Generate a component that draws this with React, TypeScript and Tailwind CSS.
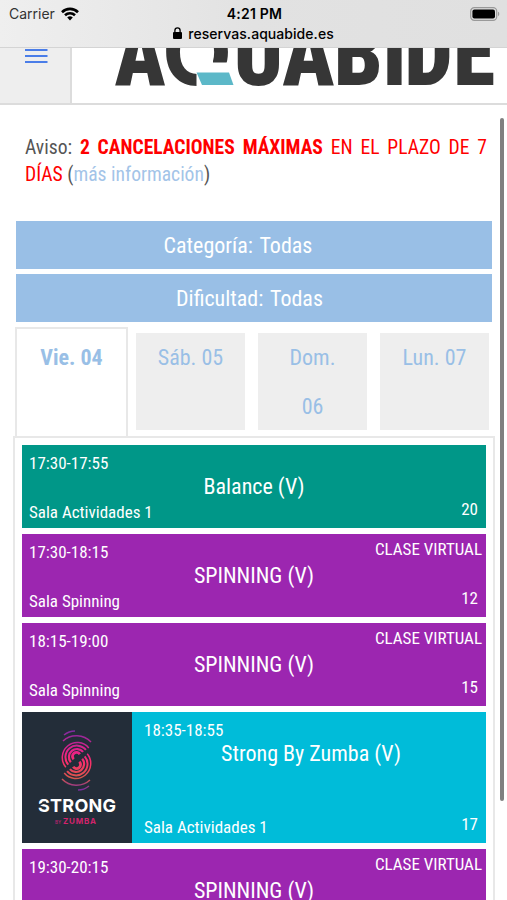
import React from 'react';

interface ActivityProps {
  time: string;
  name: string;
  room: string;
  spots: number;
  color: string;
  virtual?: boolean;
  logo?: boolean;
}

const activities: ActivityProps[] = [
  { time: '17:30-17:55', name: 'Balance (V)', room: 'Sala Actividades 1', spots: 20, color: 'bg-[#009788]' },
  { time: '17:30-18:15', name: 'SPINNING (V)', room: 'Sala Spinning', spots: 12, color: 'bg-[#9c26b0]', virtual: true },
  { time: '18:15-19:00', name: 'SPINNING (V)', room: 'Sala Spinning', spots: 15, color: 'bg-[#9c26b0]', virtual: true },
  { time: '18:35-18:55', name: 'Strong By Zumba (V)', room: 'Sala Actividades 1', spots: 17, color: 'bg-[#00bcd9]', logo: true },
];

const days = ['Sáb. 05', 'Dom. 06', 'Lun. 07'];

const StatusBar = () => (
  <div className="h-12 shrink-0 bg-gradient-to-r from-[#efefef] via-[#e2e2e2] to-[#e0e0e0] font-['Inter',sans-serif] text-black border-b border-[#d4d4d4]">
    <div className="grid grid-cols-3 h-[27px] pl-[9px] pr-[7px] items-center">
      <div className="flex items-center gap-[6px] text-[14px] text-[#333]">
        <span>Carrier</span>
        <svg width="18" height="14" viewBox="0 0 18 14" fill="none" stroke="#000" strokeWidth="2.6">
          <path d="M1 5.2a11.4 11.4 0 0 1 16 0" />
          <path d="M4 8.3a7.2 7.2 0 0 1 10 0" />
          <path d="M9 13.6 6.2 10.6a4 4 0 0 1 5.6 0z" fill="#000" stroke="none" />
        </svg>
      </div>
      <div className="text-center text-[14px] font-semibold tracking-[0.2px]">4:21 PM</div>
      <div className="flex justify-end">
        <svg width="30" height="14" viewBox="0 0 30 14">
          <rect x="0.7" y="0.7" width="26" height="12.6" rx="3.6" fill="none" stroke="#999" strokeWidth="1.2" />
          <rect x="2.4" y="2.4" width="22.6" height="9.2" rx="2" fill="#000" />
          <path d="M28 4.8c1.7.6 1.7 3.8 0 4.4z" fill="#999" />
        </svg>
      </div>
    </div>
    <div className="flex justify-center items-center gap-[6px] h-[12px] text-[14px] font-medium tracking-[0.05px]">
      <svg width="9" height="12" viewBox="0 0 9 12">
        <rect x="0" y="5" width="9" height="7" rx="1" />
        <path d="M1.9 5.5V3.4a2.6 2.6 0 0 1 5.2 0v2.1" fill="none" stroke="#000" strokeWidth="1.3" />
      </svg>
      <span>reservas.aquabide.es</span>
    </div>
  </div>
);

const SiteHeader = () => (
  <div className="flex h-[57px] shrink-0 border-b-2 border-[#dcdcdc]">
    <div className="w-[72px] bg-[#eeeeee] border-r-2 border-[#dcdcdc] pl-[25px] pt-px">
      <svg width="23" height="16" viewBox="0 0 23 16" stroke="#4a7de8" strokeWidth="2.2">
        <path d="M0 1h22.5M0 7h22.5M0 13h22.5" />
      </svg>
    </div>
    <svg width="435" height="55" viewBox="72 48 435 55" fill="#363636" className="font-['Roboto_Condensed','Roboto',sans-serif] [font-stretch:75%]">
      <text x="127.6" y="85" transform="scale(.9 1)" fontSize="93" fontWeight="900">A</text>
      <text x="162" y="85" fontSize="91" fontWeight="700" className="font-['Inter',sans-serif]">Q</text>
      <text x="254.1 307 363 415.7 439.6 492.8" y="85" transform="scale(.92 1)" fontSize="93" fontWeight="900">UABIDE</text>
      {/* the tail of the Q is replaced by the blue bar */}
      <path d="M196.5 62.5h39v42h-39zM190 59h23v11h-23z" fill="#fff" />
      <path d="M196.5 72.5H229l4.5 12.5H202z" fill="#5cb8c8" />
    </svg>
  </div>
);

const StrongLogo = () => (
  <div className="w-[110px] shrink-0 bg-[#232d39]">
    <svg width="110" height="131" viewBox="0 0 110 131" fill="none" className="font-['Inter',sans-serif]">
      <defs>
        <linearGradient id="strong" gradientUnits="userSpaceOnUse" x1="0" y1="18" x2="0" y2="78">
          <stop offset="0" stopColor="#7a2ba0" />
          <stop offset="0.35" stopColor="#e8208a" />
          <stop offset="0.55" stopColor="#f8306a" />
          <stop offset="0.8" stopColor="#d8584a" />
          <stop offset="1" stopColor="#7a2ba0" />
        </linearGradient>
      </defs>
      <g stroke="url(#strong)" strokeWidth="1.5">
        <path d="M42 23q5-4 11-4" />
        <path d="M41 29a20 20 0 0 1 28 1" />
        <path d="M66.8 35.9A15 15 0 1 0 43.8 55.2" />
        <path d="M63.9 37.9A11.5 11.5 0 1 0 46.3 52.7" strokeWidth="2" />
        <path d="M61.1 39.9A8 8 0 1 0 48.8 50.2" strokeWidth="2.2" />
        <path d="M57.8 42.2A4 4 0 1 0 51.7 47.3" strokeWidth="2.8" />
        <path d="M51.2 54.8A4 4 0 1 0 57.3 49.7" strokeWidth="2.8" />
        <path d="M47.9 57.1A8 8 0 1 0 60.2 46.8" strokeWidth="2.2" />
        <path d="M45.1 59.1A11.5 11.5 0 1 0 62.7 44.3" strokeWidth="2" />
        <path d="M42.2 61.1A15 15 0 1 0 65.2 41.8" />
        <path d="M40 67a20 20 0 0 0 28 1" />
        <path d="M56 78q6 0 11-4" />
      </g>
      <text x="16" y="99.5" fontSize="18" fontWeight="700" fill="#fff" textLength="78">STRONG</text>
      <text x="33" y="111.5" fontSize="4.5" fontWeight="600" fill="#b0246c">BY</text>
      <text x="41" y="111.5" fontSize="8" fontWeight="700" fill="#d0246c" textLength="33">ZUMBA</text>
      <path d="M15 94l9-4" stroke="#232d39" strokeWidth="1.5" />
    </svg>
  </div>
);

const Activity: React.FC<ActivityProps> = ({ time, name, room, spots, color, virtual, logo }) => (
  <div className={`flex shrink-0 text-white ${logo ? 'h-[131px]' : 'h-[83px]'} ${color}`}>
    {logo && <StrongLogo />}
    <div className="flex flex-col flex-1 pt-[6px]">
      <div className={`flex justify-between h-6 pr-1 text-[17px] ${logo ? 'pl-3' : 'pl-[7px]'}`}>
        <span className="leading-[25px]">{time}</span>
        {virtual && <span className="leading-[18px]">CLASE VIRTUAL</span>}
      </div>
      <div className={`h-[23px] leading-[23px] text-center text-[22px] ${logo ? 'pl-1' : ''}`}>{name}</div>
      <div className={`flex justify-between h-[30px] mt-auto pr-2 text-[17px] ${logo ? 'pl-3' : 'pl-[7px]'}`}>
        <span className="leading-[29px]">{room}</span>
        <span className="leading-[22px]">{spots}</span>
      </div>
    </div>
  </div>
);

export default function App() {
  return (
    <div className="relative flex flex-col w-[507px] h-[900px] overflow-hidden bg-white font-['Roboto_Condensed','Roboto',sans-serif] [font-stretch:75%]">
      <StatusBar />
      <SiteHeader />

      <p className="mt-[29px] ml-[25px] mr-[20px] h-[54px] shrink-0 text-[19.6px] leading-[27px] text-justify text-[#555]">
        Aviso: <span className="text-[#ff0000]"><b>2 CANCELACIONES MÁXIMAS</b> EN EL PLAZO DE 7 DÍAS</span>{' '}
        (<a className="text-[#a3c4e8]">más información</a>)
      </p>

      {/* Filters */}
      <div className="flex flex-col shrink-0 gap-[5px] mt-[33px] ml-4 mr-[15px] text-center text-[22px] text-white [word-spacing:2px]">
        <div className="h-[48px] leading-[49px] pr-[32px] bg-[#99bfe6]">Categoría: Todas</div>
        <div className="h-[48px] leading-[49px] pr-[9px] bg-[#99bfe6]">Dificultad: Todas</div>
      </div>

      {/* Days */}
      <div className="flex shrink-0 ml-[15px] mt-[5px] h-[109px] text-[22px] text-center text-[#99bfe6] leading-[49px]">
        <div className="w-[113px] pt-1 mr-2 border-2 border-b-0 border-[#e8e8e8] font-bold">Vie. 04</div>
        <div className="flex gap-[13px] mt-[6px] h-[97px]">
          {days.map((day) => (
            <div key={day} className="w-[109px] px-5 bg-[#eeeeee]">{day}</div>
          ))}
        </div>
      </div>

      {/* Activities of the selected day */}
      <div className="flex flex-col shrink-0 gap-[6px] ml-[13px] w-[482px] h-[466px] border-2 border-b-0 border-[#e8e8e8] pt-[7px] px-[7px]">
        {activities.map((activity) => (
          <Activity key={activity.time} {...activity} />
        ))}
        {/* last card runs past the bottom of the screen */}
        <div className="h-[53px] shrink-0 pt-[6px] text-white bg-[#9c26b0]">
          <div className="flex justify-between h-6 pl-[7px] pr-1 text-[17px]">
            <span className="leading-[25px]">19:30-20:15</span>
            <span className="leading-[18px]">CLASE VIRTUAL</span>
          </div>
          <div className="leading-[23px] text-center text-[22px]">SPINNING (V)</div>
        </div>
      </div>

      <div className="absolute left-[500px] top-[118px] w-[4px] h-[683px] rounded-full bg-[#808080]" />
    </div>
  );
}
